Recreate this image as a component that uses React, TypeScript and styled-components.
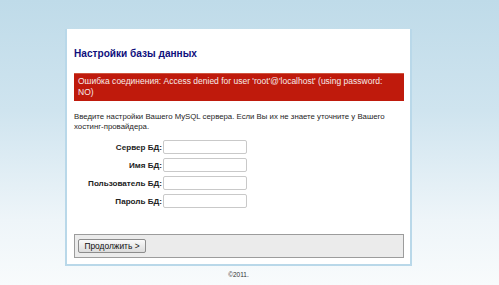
import React from 'react'
import styled, { createGlobalStyle } from 'styled-components'

const GlobalStyle = createGlobalStyle`
  html, body {
    margin: 0;
    padding: 0;
  }
  body {
    min-height: 285px;
    background: linear-gradient(#bfdbe9 0px, #cfe4ef 110px, #eef5f9 220px, #f8fbfc 285px);
    font-family: 'Liberation Sans', Arial, sans-serif;
  }
`

const fields = ['Сервер БД:', 'Имя БД:', 'Пользователь БД:', 'Пароль БД:']

const App: React.FC = () => (
  <>
    <GlobalStyle />
    <Page>
      <Card>
        <Title>Настройки базы данных</Title>
        <ErrorBox>
          Ошибка соединения: Access denied for user 'root'@'localhost' (using password: NO)
        </ErrorBox>
        <Intro>
          Введите настройки Вашего MySQL сервера. Если Вы их не знаете уточните у Вашего хостинг-провайдера.
        </Intro>
        <Form>
          {fields.map((label) => (
            <React.Fragment key={label}>
              <Label>{label}</Label>
              <Input type={label === 'Пароль БД:' ? 'password' : 'text'} />
            </React.Fragment>
          ))}
        </Form>
        <ButtonBar>
          <NextButton>Продолжить &gt;</NextButton>
        </ButtonBar>
      </Card>
      <Footer>©2011.</Footer>
    </Page>
  </>
)

// Styled components
const Page = styled.div`
  padding-top: 29px;
  padding-left: 65px;
  width: 347px;
`

const Card = styled.div`
  background: #ffffff;
  border: 2px solid #b9d8e9;
  border-top: none;
  padding: 19px 6px 6px 7px;
`

const Title = styled.h1`
  margin: 0;
  font-size: 10.1px;
  line-height: 12px;
  font-weight: bold;
  color: #0f0f7c;
`

const ErrorBox = styled.div`
  margin-top: 13px;
  background: #bf1a0c;
  border-top: 1px solid #d0553f;
  color: #f6eaea;
  font-size: 8.5px;
  line-height: 11px;
  padding: 2px 18px 3px 4px;
`

const Intro = styled.p`
  margin: 11px 0 0;
  font-size: 7.8px;
  line-height: 10px;
  color: #1e1e1e;
  padding-right: 12px;
`

const Form = styled.div`
  display: grid;
  grid-template-columns: 89px 84px;
  row-gap: 4px;
  align-items: center;
  margin-top: 8px;
`

const Label = styled.label`
  text-align: right;
  font-size: 8.1px;
  font-weight: bold;
  color: #222;
  padding-right: 1px;
`

const Input = styled.input`
  box-sizing: border-box;
  width: 84px;
  height: 14px;
  margin: 0;
  border: 1px solid #c9c9c9;
  border-radius: 2px;
  background: #fff;
  padding: 0 2px;
`

const ButtonBar = styled.div`
  margin-top: 26px;
  background: #ebebeb;
  border: 1px solid #9c9c9c;
  padding: 3px 3px;
  height: 16px;
  display: flex;
  align-items: center;
`

const NextButton = styled.button`
  box-sizing: border-box;
  height: 14px;
  width: 68px;
  padding: 0;
  font-family: 'Liberation Sans', Arial, sans-serif;
  font-size: 8.4px;
  color: #111;
  background: linear-gradient(#fafafa, #dcdcdc);
  border: 1px solid #8c8c8c;
  border-radius: 2px;
`

const Footer = styled.div`
  text-align: center;
  font-size: 6.5px;
  color: #333;
  margin-top: 5px;
`

export default App
